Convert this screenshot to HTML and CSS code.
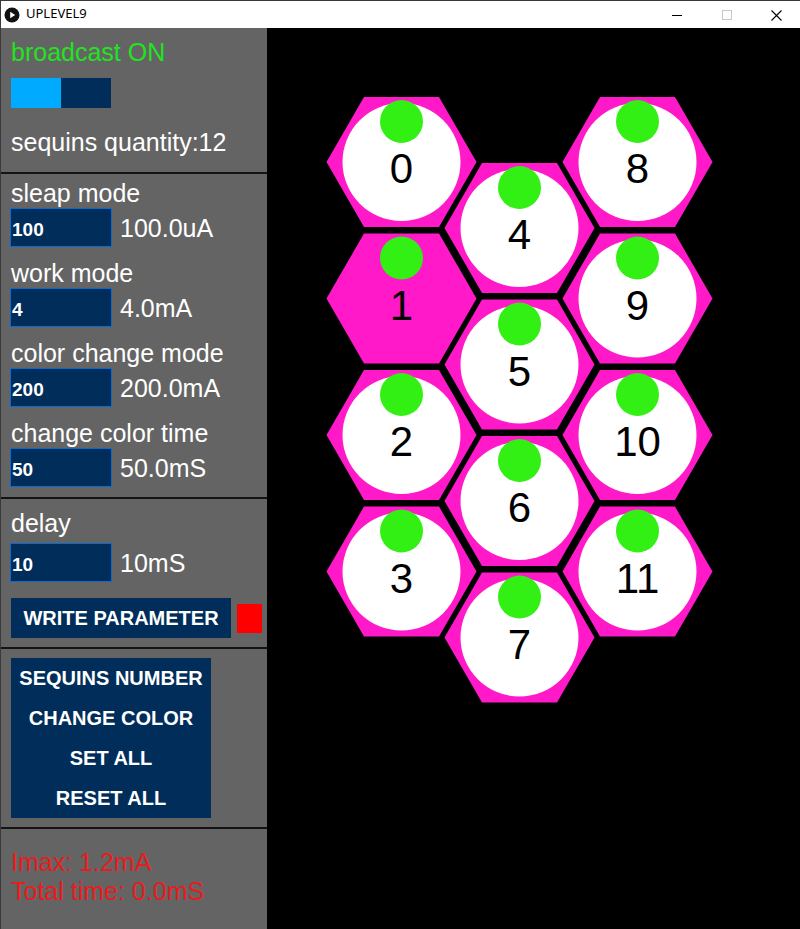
FILE: index.html
```html
<!DOCTYPE html>
<html lang="en">
<head>
<meta charset="utf-8">
<title>UPLEVEL9</title>
<link rel="stylesheet" href="styles.css">
</head>
<body>
<div class="window">
  <header class="titlebar">
    <svg class="app-icon" width="16" height="16" viewBox="0 0 16 16"><circle cx="8" cy="8" r="7.5" fill="#111"/><path d="M6.2 4.8 L11.2 8 L6.2 11.2 Z" fill="#fff"/></svg>
    <span class="title">UPLEVEL9</span>
    <div class="controls">
      <div class="ctl ctl-min"><svg width="10" height="10" viewBox="0 0 10 10"><path d="M0 5.5 H10" stroke="#000" stroke-width="1"/></svg></div>
      <div class="ctl ctl-max"><svg width="10" height="10" viewBox="0 0 10 10"><rect x="0.5" y="0.5" width="9" height="9" fill="none" stroke="#c8c8c8" stroke-width="1"/></svg></div>
      <div class="ctl ctl-close"><svg width="11" height="11" viewBox="0 0 11 11"><path d="M0.5 0.5 L10.5 10.5 M10.5 0.5 L0.5 10.5" stroke="#000" stroke-width="1.1"/></svg></div>
    </div>
  </header>
  <main class="main">
    <aside class="panel">
      <section class="sec sec-a">
        <div class="txt green">broadcast ON</div>
        <div class="toggle"><div class="tg-on"></div><div class="tg-off"></div></div>
        <div class="txt qty">sequins quantity:12</div>
      </section>
      <div class="sep"></div>
      <section class="sec sec-b">
        <div class="field">
          <div class="txt">sleap mode</div>
          <div class="row"><div class="box">100</div><span class="txt">100.0uA</span></div>
        </div>
        <div class="field">
          <div class="txt">work mode</div>
          <div class="row"><div class="box">4</div><span class="txt">4.0mA</span></div>
        </div>
        <div class="field">
          <div class="txt">color change mode</div>
          <div class="row"><div class="box">200</div><span class="txt">200.0mA</span></div>
        </div>
        <div class="field">
          <div class="txt">change color time</div>
          <div class="row"><div class="box">50</div><span class="txt">50.0mS</span></div>
        </div>
      </section>
      <div class="sep"></div>
      <section class="sec sec-c">
        <div class="txt">delay</div>
        <div class="row"><div class="box">10</div><span class="txt">10mS</span></div>
        <div class="write-row"><div class="btn btn-write">WRITE PARAMETER</div><div class="led"></div></div>
      </section>
      <div class="sep"></div>
      <section class="sec sec-d">
        <div class="btn-group">
          <div class="btn">SEQUINS NUMBER</div>
          <div class="btn">CHANGE COLOR</div>
          <div class="btn">SET ALL</div>
          <div class="btn">RESET ALL</div>
        </div>
      </section>
      <div class="sep"></div>
      <section class="sec sec-e">
        <div class="txt red">Imax: 1.2mA</div>
        <div class="txt red">Total time: 0.0mS</div>
      </section>
    </aside>
    <div class="canvas">
      <svg class="hexes" width="533" height="901" viewBox="0 0 533 901">
        <defs>
          <polygon id="hex" points="75,0 37.5,65 -37.5,65 -75,0 -37.5,-65 37.5,-65"/>
        </defs>
        <g transform="translate(-267,-28)" font-family="'Liberation Sans', Arial, sans-serif" font-size="42" text-anchor="middle">
          <g transform="translate(401.5,162)"><use href="#hex" class="hx"/><circle r="59" class="wc"/><circle cy="-40.5" r="21.5" class="gc"/><text y="21">0</text></g>
          <g transform="translate(401.5,298.5)"><use href="#hex" class="hx"/><circle cy="-40.5" r="21.5" class="gc"/><text y="21">1</text></g>
          <g transform="translate(401.5,435)"><use href="#hex" class="hx"/><circle r="59" class="wc"/><circle cy="-40.5" r="21.5" class="gc"/><text y="21">2</text></g>
          <g transform="translate(401.5,571.5)"><use href="#hex" class="hx"/><circle r="59" class="wc"/><circle cy="-40.5" r="21.5" class="gc"/><text y="21">3</text></g>
          <g transform="translate(519.5,228)"><use href="#hex" class="hx"/><circle r="59" class="wc"/><circle cy="-40.5" r="21.5" class="gc"/><text y="21">4</text></g>
          <g transform="translate(519.5,364.5)"><use href="#hex" class="hx"/><circle r="59" class="wc"/><circle cy="-40.5" r="21.5" class="gc"/><text y="21">5</text></g>
          <g transform="translate(519.5,501)"><use href="#hex" class="hx"/><circle r="59" class="wc"/><circle cy="-40.5" r="21.5" class="gc"/><text y="21">6</text></g>
          <g transform="translate(519.5,637.5)"><use href="#hex" class="hx"/><circle r="59" class="wc"/><circle cy="-40.5" r="21.5" class="gc"/><text y="21">7</text></g>
          <g transform="translate(637.5,162)"><use href="#hex" class="hx"/><circle r="59" class="wc"/><circle cy="-40.5" r="21.5" class="gc"/><text y="21">8</text></g>
          <g transform="translate(637.5,298.5)"><use href="#hex" class="hx"/><circle r="59" class="wc"/><circle cy="-40.5" r="21.5" class="gc"/><text y="21">9</text></g>
          <g transform="translate(637.5,435)"><use href="#hex" class="hx"/><circle r="59" class="wc"/><circle cy="-40.5" r="21.5" class="gc"/><text y="21">10</text></g>
          <g transform="translate(637.5,571.5)"><use href="#hex" class="hx"/><circle r="59" class="wc"/><circle cy="-40.5" r="21.5" class="gc"/><text y="21">11</text></g>
        </g>
      </svg>
    </div>
  </main>
</div>
</body>
</html>
```
FILE: styles.css
```css
* { box-sizing: border-box; }
html, body { margin: 0; padding: 0; }
body {
  width: 800px;
  height: 929px;
  overflow: hidden;
  background: #000;
  font-family: "Liberation Sans", Arial, sans-serif;
}
.window {
  width: 800px;
  height: 929px;
  display: flex;
  flex-direction: column;
  border-left: 1px solid #3a3a3a;
}
.titlebar {
  height: 28px;
  flex: none;
  background: #fff;
  border-top: 1px solid #3a3a3a;
  display: flex;
  align-items: flex-start;
}
.app-icon { margin: 6px 0 0 3px; flex: none; }
.title {
  font-family: "Noto Sans", "Open Sans", sans-serif;
  font-size: 13px;
  line-height: 25px;
  margin-left: 6px;
  color: #000;
}
.controls { margin-left: auto; display: flex; height: 27px; }
.ctl { display: flex; align-items: center; justify-content: center; height: 27px; }
.ctl-min { width: 50px; }
.ctl-max { width: 50px; }
.ctl-close { width: 48px; padding-top: 1px; }
.main { flex: 1; display: flex; min-height: 0; }
.panel {
  width: 266px;
  flex: none;
  background: #646464;
  display: flex;
  flex-direction: column;
}
.sec { padding-left: 10px; flex: none; }
.sep { height: 2px; background: #141414; flex: none; }
.txt {
  font-size: 25px;
  line-height: 30px;
  color: #fff;
  white-space: nowrap;
}
.green { color: #22e322; }
.red { color: #e81c1c; line-height: 29px; }
.sec-a { height: 144px; padding-top: 9px; }
.toggle { display: flex; margin-top: 11px; width: 100px; height: 30px; }
.tg-on { width: 50px; background: #00aaff; }
.tg-off { width: 50px; background: #002d5a; }
.qty { margin-top: 19px; }
.sec-b { height: 323px; padding-top: 4px; }
.field + .field { margin-top: 11px; }
.row { display: flex; align-items: center; gap: 8px; height: 39px; }
.box {
  width: 102px;
  height: 39px;
  margin-left: -1px;
  background: #002d5a;
  border: 1px solid #0c6bc8;
  color: #fff;
  font-weight: bold;
  font-size: 19px;
  line-height: 33px;
  padding: 4px 0 0 1px;
}
.sec-c { height: 148px; padding-top: 9px; }
.sec-c .row { margin-top: 5px; }
.write-row { display: flex; align-items: center; margin-top: 16px; }
.btn {
  height: 40px;
  line-height: 40px;
  text-align: center;
  color: #fff;
  font-weight: bold;
  font-size: 20px;
  white-space: nowrap;
}
.btn-write { width: 220px; background: #002d5a; }
.led { width: 25px; height: 29px; margin-left: 6px; background: #ff0000; }
.sec-d { height: 178px; padding-top: 9px; }
.btn-group { width: 200px; background: #002d5a; display: flex; flex-direction: column; }
.sec-e { flex: 1; padding-top: 19px; }
.canvas { flex: 1; background: #000; overflow: hidden; }
.hexes { display: block; }
.hx { fill: #ff19c8; }
.wc { fill: #fff; }
.gc { fill: #33f014; }
.hexes text { fill: #000; }
```
